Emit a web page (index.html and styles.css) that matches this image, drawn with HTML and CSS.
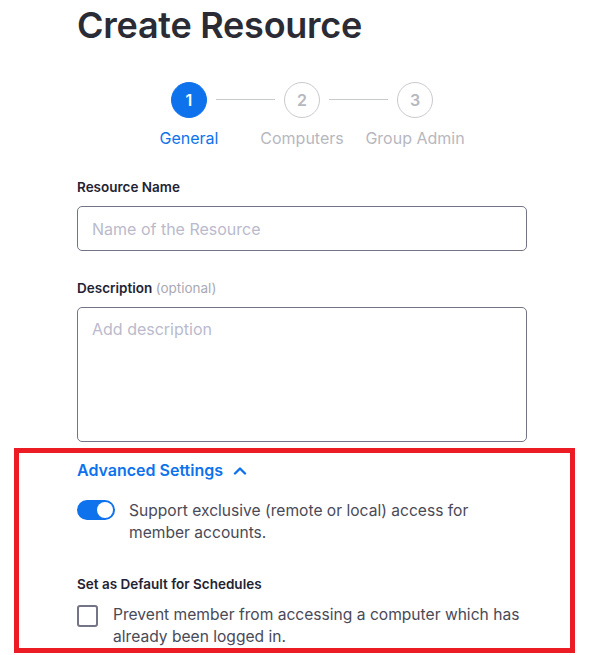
FILE: index.html
```html
<!DOCTYPE html>
<html>
<head>
<meta charset="utf-8">
<link rel="stylesheet" href="styles.css">
</head>
<body>
<div class="page">
  <h1 class="title">Create Resource</h1>
  <div class="stepper">
    <div class="step active">
      <div class="circle">1</div>
      <div class="step-label">General</div>
    </div>
    <div class="line"></div>
    <div class="step">
      <div class="circle">2</div>
      <div class="step-label">Computers</div>
    </div>
    <div class="line"></div>
    <div class="step">
      <div class="circle">3</div>
      <div class="step-label">Group Admin</div>
    </div>
  </div>
  <div class="field">
    <label class="label">Resource Name</label>
    <div class="input">Name of the Resource</div>
  </div>
  <div class="field">
    <label class="label">Description <span class="opt">(optional)</span></label>
    <div class="input textarea">Add description</div>
  </div>
  <div class="highlight">
    <div class="adv">Advanced Settings
      <svg class="chev" width="14" height="9" viewBox="0 0 14 9"><path d="M2 7.5 L7 2.5 L12 7.5" fill="none" stroke="#0e72ed" stroke-width="2.4" stroke-linecap="round" stroke-linejoin="round"/></svg>
    </div>
    <div class="option">
      <div class="toggle"><div class="knob"></div></div>
      <div class="opt-text">Support exclusive (remote or local) access for member accounts.</div>
    </div>
    <div class="label sub">Set as Default for Schedules</div>
    <div class="option check-row">
      <div class="checkbox"></div>
      <div class="opt-text">Prevent member from accessing a computer which has already been logged in.</div>
    </div>
  </div>
</div>
</body>
</html>
```

FILE: styles.css
```css
* { box-sizing: border-box; }
html, body { margin: 0; padding: 0; background: #fff; }
body { font-family: Inter, "Noto Sans", sans-serif; color: #232333; overflow: hidden; }
.page { width: 591px; height: 655px; padding-left: 77px; }
.title {
  margin: 0; padding-top: 3px;
  font-size: 36px; line-height: 44px; font-weight: 600; color: #2b2b35;
  letter-spacing: -0.25px;
}
.stepper {
  display: flex; align-items: flex-start;
  margin-top: 35px; margin-left: 94px;
}
.step { width: 36px; display: flex; flex-direction: column; align-items: center; }
.circle {
  width: 36px; height: 36px; border-radius: 50%;
  border: 1.5px solid #c9c9d0; color: #b7b7bf;
  display: flex; align-items: center; justify-content: center;
  font-size: 16px; font-weight: 600;
}
.step.active .circle { background: #0e72ed; border-color: #0e72ed; color: #fff; }
.step-label {
  margin-top: 10px; white-space: nowrap; font-size: 16px; line-height: 20px; color: #b7b7bf;
}
.step.active .step-label { color: #0e72ed; }
.line { width: 59px; height: 1px; background: #c9c9d0; margin: 17px 9px 0; }
.field { margin-top: 30px; width: 450px; }
.field + .field { margin-top: 28px; }
.label { display: block; font-size: 13.5px; line-height: 18px; font-weight: 600; color: #232333; }
.opt { font-weight: 400; color: #a9a9b4; }
.input {
  margin-top: 10px; height: 45px; border: 1px solid #747487; border-radius: 5px;
  padding: 0 14px; display: flex; align-items: center;
  font-size: 16px; color: #babacc;
}
.input.textarea { height: 135px; align-items: flex-start; padding-top: 10px; line-height: 22px; }
.highlight {
  margin-left: -63px; margin-top: 6px; width: 561px; height: 205px;
  border: 5px solid #ec1c24; padding: 6px 0 0 58px;
}
.adv {
  display: flex; align-items: center; gap: 10px;
  font-size: 16px; line-height: 22px; font-weight: 600; color: #0e72ed;
}
.chev { margin-top: 1px; }
.option { display: flex; align-items: flex-start; margin-top: 19px; width: 420px; }
.toggle {
  width: 38px; height: 20px; border-radius: 10px; background: #0e72ed;
  flex: none; position: relative; margin-top: 0px; margin-right: 14px;
}
.knob {
  position: absolute; right: 2px; top: 2px; width: 16px; height: 16px; border-radius: 50%;
  background: #fff;
}
.opt-text { font-size: 15.6px; line-height: 22px; color: #4a4a57; }
.label.sub { margin-top: 31px; }
.check-row { margin-top: 11px; width: 450px; }
.checkbox {
  width: 21px; height: 22px; border: 2px solid #747487; border-radius: 3px;
  flex: none; margin-top: 1px; margin-right: 15px;
}
```
